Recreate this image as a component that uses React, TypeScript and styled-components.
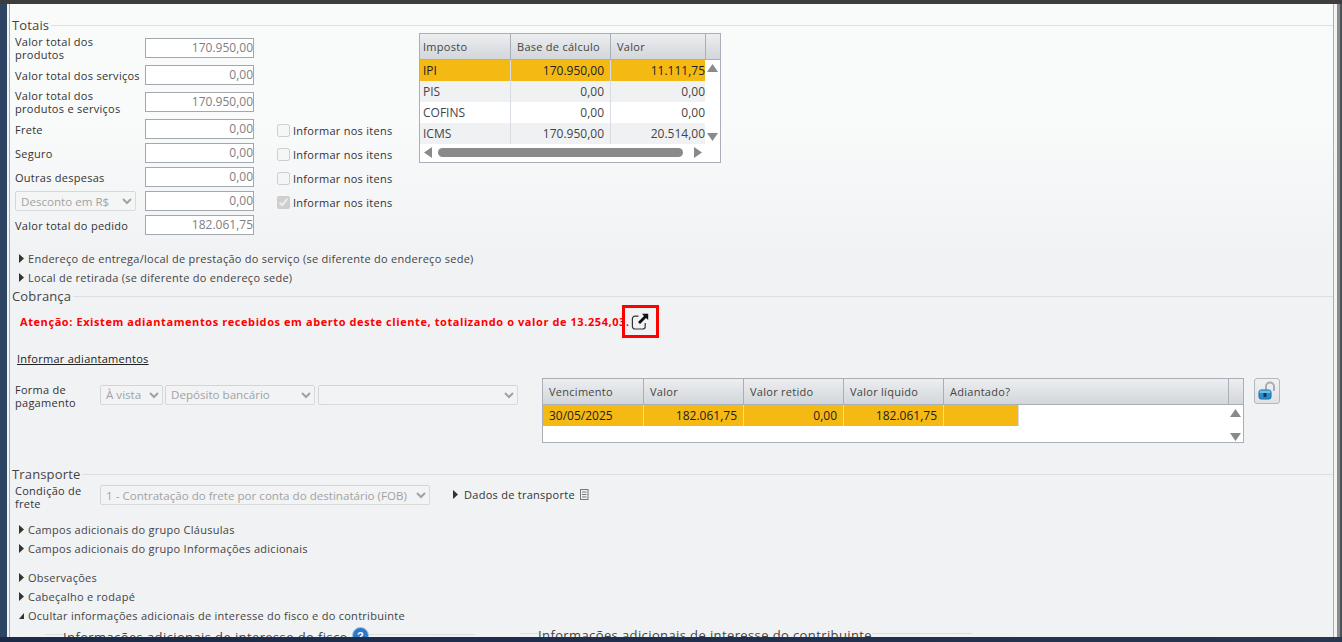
import React from "react";
import styled, { createGlobalStyle } from "styled-components";

const Global = createGlobalStyle`
  html, body { margin: 0; padding: 0; height: 100%; overflow: hidden; background: #2d4463; }
  #root { height: 100%; }
  * { box-sizing: border-box; }
`;
const FONT = `"Open Sans", "Noto Sans", "Liberation Sans", sans-serif`;

const Shell = styled.div`
  width: 1342px; height: 642px; display: flex; flex-direction: column; overflow: hidden;
  font-family: ${FONT}; font-size: 11px; color: #333; letter-spacing: 0.27px;
`;
const TopBar = styled.div`height: 4px; background: #3d3d3d; flex: none;`;
const BottomBar = styled.div`height: 5px; flex: none; background: linear-gradient(90deg, #1b2a47, #1e2e4c 50%, #27374f);`;
const Middle = styled.div`flex: 1; display: flex; min-height: 0;`;
const LeftEdge = styled.div`
  width: 10px; flex: none; background: linear-gradient(90deg, #2d4463 0 7px, #f4f5f6 7px 9px, #a9afb8 9px);
`;
const RightEdge = styled.div`
  width: 9px; flex: none; background: linear-gradient(90deg, #a9adb4 0 1px, #f2f4f4 1px 4px, #8a8a8a 4px 7px, #4a5358 7px);
`;
const Panel = styled.div`
  flex: 1; min-width: 0; overflow: hidden; background: linear-gradient(180deg, #f9fafa 0, #f9fafa 120px, #f1f2f4 250px);
`;
const Legend = styled.div<{ $top: number }>`
  display: flex; align-items: center; height: 16px; margin-top: ${p => p.$top}px; padding-left: 2px;
  font-size: 13px; color: #444; letter-spacing: 0.15px;
  &::after { content: ""; flex: 1; height: 1px; background: #dcdfe2; margin-left: 2px; }
`;
const TotalsRow = styled.div`display: flex;`;
const FormCol = styled.div`width: 409px; flex: none; padding: 5px 0 0 5px;`;
const Field = styled.div<{ $mb: number }>`
  display: flex; align-items: center; height: 20px; margin-bottom: ${p => p.$mb}px;
`;
const FieldLabel = styled.div`width: 130px; flex: none; line-height: 13px; color: #333;`;
const ValueBox = styled.div`
  width: 109px; height: 20px; flex: none; border: 1px solid #a3a8ae; background: #fff;
  text-align: right; line-height: 18px; padding-right: 0; color: #808080; font-size: 12px; letter-spacing: 0;
`;
const SelectSlot = styled.div`width: 130px; flex: none;`;
const NativeSelect = styled.select<{ $w: number; $mr?: number; $lift?: boolean }>`
  width: ${p => p.$w}px; height: 20px; margin-right: ${p => p.$mr ?? 0}px; font-family: ${FONT}; font-size: 11.6px;
  padding: 0 0 ${p => (p.$lift ? 2 : 0)}px 1px;
  flex: none;
`;
const Check = styled.label`
  display: flex; align-items: center; margin-left: 23px; color: #333; padding-top: 2px;
  input { width: 13px; height: 13px; margin: 0 3px 0 0; }
`;
const TaxGrid = styled.div`
  width: 302px; height: 130px; border: 1px solid #a9afb7; background: #fff; flex: none;
`;
const HeadRow = styled.div<{ $cols: string }>`
  display: grid; grid-template-columns: ${p => p.$cols}; height: 26px;
  background: linear-gradient(180deg, #eceef0, #d3d6da); border-bottom: 1px solid #a9afb7;
`;
const HeadCell = styled.div<{ $pad?: number }>`
  padding-left: ${p => p.$pad ?? 6}px; line-height: 25px; color: #444; border-right: 1px solid #a9afb7;
  &:last-child { border-right: 0; }
`;
const BodyWrap = styled.div`display: flex;`;
const BodyRows = styled.div`flex: 1; min-width: 0;`;
const DataRow = styled.div<{ $cols: string; $tone: "sel" | "alt" | "plain"; $h: number }>`
  display: grid; grid-template-columns: ${p => p.$cols}; height: ${p => p.$h}px;
  background: ${p => (p.$tone === "sel" ? "#f5b914" : p.$tone === "alt" ? "#f0f1f3" : "#fff")};
  color: ${p => (p.$tone === "sel" ? "#222" : "#444")};
`;
const DataCell = styled.div<{ $right?: boolean; $pad?: number }>`
  line-height: 21px;
  padding: 0 ${p => (p.$right ? p.$pad ?? 6 : 0)}px 0 ${p => (p.$right ? 0 : p.$pad ?? 3)}px;
  text-align: ${p => (p.$right ? "right" : "left")};
  border-right: 1px solid #d9dde3; font-size: 12px; letter-spacing: 0;
  &:last-child { border-right: 0; }
`;
const ScrollTrack = styled.div`
  width: 15px; flex: none; display: flex; flex-direction: column; justify-content: space-between; align-items: center; padding: 4px 0 3px;
`;
const HScroll = styled.div`
  height: 17px; display: flex; align-items: center; padding: 0 18px 0 4px; gap: 6px;
`;
const Thumb = styled.div`flex: 1; height: 9px; margin-right: 5px; border-radius: 5px; background: #8a8a8a;`;
const Arrow = styled.svg`display: block; flex: none; fill: #8a8a8a;`;

const Disclosure = styled.div<{ $mt?: number }>`
  display: flex; align-items: center; height: 19px; margin-top: ${p => p.$mt ?? 0}px; padding-left: 9px; gap: 4px; color: #444;
`;
const Tri = styled.svg`flex: none; display: block; fill: #333;`;
const WarnRow = styled.div`display: flex; align-items: center; height: 33px; margin-top: 1px; padding-left: 10px;`;
const WarnText = styled.div`color: #f00; font-weight: 700; font-size: 11px; letter-spacing: 0.58px;`;
const RedBox = styled.a`
  width: 37px; height: 33px; border: 3px solid #f00; display: flex; align-items: center; justify-content: center; margin-left: -8px; flex: none;
`;
const AdvLink = styled.div`
  margin: 13px 0 0 7px; height: 15px; line-height: 15px; color: #222; text-decoration: underline;
`;
const PayRow = styled.div`display: flex; margin-top: 12px; height: 65px;`;
const PayLabel = styled.div`width: 90px; flex: none; padding: 5px 0 0 5px; line-height: 13px; color: #333;`;
const PaySelects = styled.div`display: flex; width: 442px; flex: none; padding-top: 7px; height: 27px;`;
const PayGrid = styled.div`width: 702px; height: 65px; border: 1px solid #a9afb7; background: #fff; flex: none;`;
const LockBtn = styled.div`
  width: 26px; height: 26px; margin-left: 10px; border: 1px solid #b3b8be; border-radius: 3px; background: linear-gradient(180deg,#f0f1f3,#dfe1e4);
  display: flex; align-items: center; justify-content: center;
`;
const FreightRow = styled.div`display: flex; align-items: center; height: 26px;`;
const FreightLabel = styled.div`width: 90px; flex: none; padding: 4px 0 0 5px; line-height: 13px; color: #333;`;
const FreightExtra = styled.div`display: flex; align-items: center; margin: -1px 0 0 23px; gap: 6px; color: #333;`;
const DocIcon = styled.svg`display: block; margin-left: -2px;`;
const SubRow = styled.div`display: flex; margin-top: 2px; height: 20px; align-items: flex-start;`;
const SubBox = styled.div<{ $ml: number; $w: number; $top: number; $line: number }>`
  width: ${p => p.$w}px; margin: ${p => p.$top}px 0 0 ${p => p.$ml}px; flex: none; display: flex; align-items: center; height: 16px; font-size: 13px; color: #444; letter-spacing: 0.39px;
  &::before { content: ""; width: 18px; height: 1px; background: #dcdfe2; align-self: flex-start; margin-top: ${p => p.$line}px; }
  &::after { content: ""; flex: 1; height: 1px; background: #dcdfe2; align-self: flex-start; margin-top: ${p => p.$line}px; }
`;
const HelpDot = styled.svg`display: block; margin: -3px 0 0 4px; flex: none;`;
const PayBlank = styled.div`background: #fff;`;
const PayTrack = styled.div`
  width: 15px; flex: none; display: flex; flex-direction: column; justify-content: space-between; align-items: center; height: 38px; padding: 4px 0 2px;
`;

const TriRight = () => (
  <Tri width="5" height="9" viewBox="0 0 5 9"><path d="M0 0l5 4.5L0 9z" /></Tri>
);
const TriDown = () => (
  <Tri width="5" height="9" viewBox="0 0 5 9"><path d="M5 2v6H0z" /></Tri>
);

const taxCols = "91px 100px 95px 1fr";
const payCols = "101px 100px 100px 100px 285px 1fr";
const taxBody = "91px 100px 1fr";
const payBody = "101px 100px 100px 100px 75px 1fr";

const fields: [React.ReactNode, string, number][] = [
  [<>Valor total dos<br />produtos</>, "170.950,00", 7],
  ["Valor total dos serviços", "0,00", 7],
  [<>Valor total dos<br />produtos e serviços</>, "170.950,00", 7],
  ["Frete", "0,00", 4],
  ["Seguro", "0,00", 4],
  ["Outras despesas", "0,00", 4],
  ["", "0,00", 4],
  ["Valor total do pedido", "182.061,75", 0],
];

const taxes: [string, string, string, "sel" | "alt" | "plain"][] = [
  ["IPI", "170.950,00", "11.111,75", "sel"],
  ["PIS", "0,00", "0,00", "alt"],
  ["COFINS", "0,00", "0,00", "plain"],
  ["ICMS", "170.950,00", "20.514,00", "alt"],
];

const Up = () => <Arrow width="11" height="8" viewBox="0 0 11 8"><path d="M5.5 0L11 8H0z" /></Arrow>;
const Down = () => <Arrow width="11" height="8" viewBox="0 0 11 8"><path d="M0 0h11L5.5 8z" /></Arrow>;

export default function App() {
  return (
    <Shell>
      <Global />
      <TopBar />
      <Middle>
        <LeftEdge />
        <Panel>
          <Legend $top={13}>Totais</Legend>
          <TotalsRow>
            <FormCol>
              {fields.map(([label, value, mb], i) => (
                <Field key={i} $mb={mb}>
                  {i === 6 ? (
                    <SelectSlot>
                      <NativeSelect $w={121} disabled defaultValue="d">
                        <option value="d">Desconto em R$</option>
                      </NativeSelect>
                    </SelectSlot>
                  ) : (
                    <FieldLabel>{label}</FieldLabel>
                  )}
                  <ValueBox>{value}</ValueBox>
                  {i >= 3 && i <= 6 && (
                    <Check>
                      <input type="checkbox" disabled defaultChecked={i === 6} />
                      Informar nos itens
                    </Check>
                  )}
                </Field>
              ))}
            </FormCol>
            <TaxGrid>
              <HeadRow $cols={taxCols}>
                <HeadCell $pad={3}>Imposto</HeadCell>
                <HeadCell>Base de cálculo</HeadCell>
                <HeadCell>Valor</HeadCell>
                <HeadCell />
              </HeadRow>
              <BodyWrap>
                <BodyRows>
                  {taxes.map(([a, b, c, tone]) => (
                    <DataRow key={a} $cols={taxBody} $tone={tone} $h={21}>
                      <DataCell>{a}</DataCell>
                      <DataCell $right>{b}</DataCell>
                      <DataCell $right $pad={0}>{c}</DataCell>
                    </DataRow>
                  ))}
                </BodyRows>
                <ScrollTrack><Up /><Down /></ScrollTrack>
              </BodyWrap>
              <HScroll>
                <Arrow width="8" height="11" viewBox="0 0 8 11"><path d="M8 0v11L0 5.5z" /></Arrow>
                <Thumb />
                <Arrow width="8" height="11" viewBox="0 0 8 11"><path d="M0 0l8 5.5L0 11z" /></Arrow>
              </HScroll>
            </TaxGrid>
          </TotalsRow>
          <Disclosure $mt={14}><TriRight />Endereço de entrega/local de prestação do serviço (se diferente do endereço sede)</Disclosure>
          <Disclosure><TriRight />Local de retirada (se diferente do endereço sede)</Disclosure>
          <Legend $top={1}>Cobrança</Legend>
          <WarnRow>
            <WarnText>Atenção: Existem adiantamentos recebidos em aberto deste cliente, totalizando o valor de 13.254,03.</WarnText>
            <RedBox>
              <svg width="18" height="17" viewBox="0 0 18 17" fill="none">
                <path d="M7.5 3.2H4a2.6 2.6 0 0 0-2.6 2.6v7.6A2.6 2.6 0 0 0 4 16h7.6a2.6 2.6 0 0 0 2.6-2.6V10" stroke="#333" strokeWidth="1.2" />
                <path d="M11 0.8H17.2V7L15 5 9 11 7 9 13 3z" fill="#111" />
              </svg>
            </RedBox>
          </WarnRow>
          <AdvLink>Informar adiantamentos</AdvLink>
          <PayRow>
            <PayLabel>Forma de<br />pagamento</PayLabel>
            <PaySelects>
              <NativeSelect $w={63} $mr={2} $lift disabled defaultValue="a"><option value="a">À vista</option></NativeSelect>
              <NativeSelect $w={150} $mr={3} $lift disabled defaultValue="b"><option value="b">Depósito bancário</option></NativeSelect>
              <NativeSelect $w={200} $lift disabled defaultValue=""><option value=""></option></NativeSelect>
            </PaySelects>
            <PayGrid>
              <HeadRow $cols={payCols}>
                <HeadCell>Vencimento</HeadCell>
                <HeadCell>Valor</HeadCell>
                <HeadCell>Valor retido</HeadCell>
                <HeadCell>Valor líquido</HeadCell>
                <HeadCell>Adiantado?</HeadCell>
                <HeadCell />
              </HeadRow>
              <BodyWrap>
                <BodyRows>
                  <DataRow $cols={payBody} $tone="sel" $h={21}>
                    <DataCell $pad={6}>30/05/2025</DataCell>
                    <DataCell $right>182.061,75</DataCell>
                    <DataCell $right>0,00</DataCell>
                    <DataCell $right>182.061,75</DataCell>
                    <DataCell />
                    <PayBlank />
                  </DataRow>
                </BodyRows>
                <PayTrack><Up /><Down /></PayTrack>
              </BodyWrap>
            </PayGrid>
            <LockBtn>
              <svg width="18" height="20" viewBox="0 0 18 20" fill="none">
                <path d="M8 10V5.5a4 4 0 0 1 8 0V10" stroke="#a8aeb4" strokeWidth="2" />
                <rect x="1" y="9" width="12" height="9" rx="2" fill="#2a8ec9" stroke="#1c6a9c" />
                <rect x="1.5" y="9.5" width="11" height="2.5" fill="#6dbde8" />
                <rect x="5.5" y="12" width="3" height="4" fill="#0d3a5c" />
              </svg>
            </LockBtn>
          </PayRow>
          <Legend $top={23}>Transporte</Legend>
          <FreightRow>
            <FreightLabel>Condição de<br />frete</FreightLabel>
            <NativeSelect $w={330} disabled defaultValue="f">
              <option value="f">1 - Contratação do frete por conta do destinatário (FOB)</option>
            </NativeSelect>
            <FreightExtra>
              <TriRight />Dados de transporte
              <DocIcon width="10" height="11" viewBox="0 0 10 11" fill="none" stroke="#777">
                <rect x="1.5" y="0.5" width="7.5" height="10" />
                <path d="M3 3h4.5M3 5.5h4.5M3 8h4.5" />
              </DocIcon>
            </FreightExtra>
          </FreightRow>
          <Disclosure $mt={12}><TriRight />Campos adicionais do grupo Cláusulas</Disclosure>
          <Disclosure><TriRight />Campos adicionais do grupo Informações adicionais</Disclosure>
          <Disclosure $mt={10}><TriRight />Observações</Disclosure>
          <Disclosure><TriRight />Cabeçalho e rodapé</Disclosure>
          <Disclosure><TriDown />Ocultar informações adicionais de interesse do fisco e do contribuinte</Disclosure>
          <SubRow>
            <SubBox $ml={35} $w={430} $top={2} $line={5}>
              Informações adicionais de interesse do fisco
              <HelpDot width="17" height="17" viewBox="0 0 17 17">
                <circle cx="8.5" cy="8.5" r="8" fill="#2f78c8" stroke="#9fc4ea" />
                <text x="8.5" y="12.5" textAnchor="middle" fontSize="11" fontWeight="700" fill="#fff" fontFamily="Liberation Sans">?</text>
              </HelpDot>
            </SubBox>
            <SubBox $ml={45} $w={452} $top={0} $line={6}>Informações adicionais de interesse do contribuinte</SubBox>
          </SubRow>
        </Panel>
        <RightEdge />
      </Middle>
      <BottomBar />
    </Shell>
  );
}
